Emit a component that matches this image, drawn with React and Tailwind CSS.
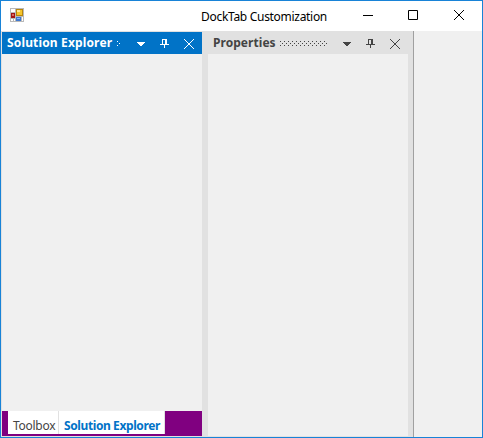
const FONT = 'font-["Noto_Sans","Open_Sans",sans-serif]';

function AppIcon() {
  return (
    <svg width="14" height="14" viewBox="0 0 14 14" shapeRendering="crispEdges">
      <rect width="14" height="14" fill="#b9b9b9" />
      <rect x="1" y="1" width="4" height="3" fill="#fff" />
      <rect x="1" y="5" width="4" height="5" fill="#a31515" />
      <rect x="2" y="6" width="2" height="2" fill="#d9675f" />
      <rect x="6" y="1" width="7" height="7" fill="#b8860b" />
      <rect x="7" y="2" width="5" height="5" fill="#f5c52c" />
      <rect x="7" y="2" width="3" height="2" fill="#fde694" />
      <rect x="6" y="9" width="5" height="4" fill="#3f78d0" />
      <rect x="7" y="10" width="3" height="1" fill="#8db8f5" />
      <rect x="12" y="9" width="1" height="4" fill="#fff" />
      <rect x="1" y="11" width="2" height="2" fill="#fff" />
      <rect x="4" y="11" width="1" height="2" fill="#fff" />
    </svg>
  );
}

function Grip({ width }) {
  const dots = [];
  for (let row = 0; row < 3; row++) {
    for (let x = row === 1 ? 2 : 0; x < width; x += 4) dots.push([x, row * 2]);
  }
  return (
    <svg className="mt-[9px]" width={width} height="5" fill="currentColor" shapeRendering="crispEdges">
      {dots.map(([x, y]) => <rect key={x + '-' + y} x={x} y={y} width="1" height="1" />)}
    </svg>
  );
}

function HeaderButtons() {
  return (
    <div className="ml-auto flex items-start pt-[7px] pr-[8px]">
      <svg className="mt-[3px] mr-[15px]" width="8" height="4" fill="currentColor" shapeRendering="crispEdges">
        <path d="M0 0h8v1H0zM1 1h6v1H1zM2 2h4v1H2zM3 3h2v1H3z" />
      </svg>
      <svg className="mr-[15px]" width="9" height="9" fill="currentColor" shapeRendering="crispEdges">
        <path d="M2 0h5v1H2zM2 1h1v4H2zM5 1h2v4H5zM0 5h9v1H0zM4 6h1v3H4z" />
      </svg>
      <svg width="10" height="10" stroke="currentColor" fill="none">
        <path d="M0 0l10 10M10 0L0 10" />
      </svg>
    </div>
  );
}

function Header({ title, active, grip }) {
  return (
    <div className={`flex h-[22px] items-start pl-[5px] ${active ? 'bg-[#0173c7] text-white' : 'bg-[#e1e1e1] text-[#444]'}`}>
      <span className={`whitespace-nowrap text-[12px] leading-[22px] font-bold ${active ? 'w-[110px] tracking-[0.15px]' : 'w-[67px] tracking-[0.05px]'}`}>{title}</span>
      <Grip width={grip} />
      <HeaderButtons />
    </div>
  );
}

export default function App() {
  return (
    <div className={`flex h-[438px] w-[483px] flex-col overflow-hidden border border-[#1883d7] bg-[#f0f0f0] ${FONT}`}>
      <div className="flex h-[30px] shrink-0 items-start bg-white pt-[7px] pl-[9px] text-black">
        <AppIcon />
        <span className="ml-[177px] whitespace-nowrap text-[12px] leading-4 tracking-[-0.3px] pt-px">DockTab Customization</span>
        <div className="ml-auto flex items-center pt-[2px] pr-[18px]">
          <svg width="10" height="10" fill="currentColor" shapeRendering="crispEdges"><path d="M0 5h10v1H0z" /></svg>
          <svg className="ml-[35px]" width="10" height="10" fill="none" stroke="currentColor"><path d="M.5.5h9v9h-9z" /></svg>
          <svg className="ml-[36px]" width="10" height="10" fill="none" stroke="currentColor"><path d="M0 0l10 10M10 0L0 10" /></svg>
        </div>
      </div>
      <div className="flex min-h-0 flex-1">
        <div className="flex w-[412px] border-t border-l border-[#e1e1e1]">
          <section className="flex w-[200px] flex-col">
            <Header title="Solution Explorer" active grip={4} />
            <div className="flex-1" />
            <div className="flex h-[26px] border-b border-[#e1e1e1] bg-[#800080] pl-[6px] text-[12px]">
              <div className="h-[23px] w-[51px] border-r border-[#e1e1e1] bg-white pl-[5px] leading-[30px] tracking-[-0.28px] whitespace-nowrap text-[#444]">Toolbox</div>
              <div className="h-[23px] w-[106px] border-r border-[#e1e1e1] bg-white pl-[5px] leading-[30px] font-bold tracking-[-0.4px] whitespace-nowrap text-[#0173c7]">Solution Explorer</div>
            </div>
          </section>
          <div className="w-[6px] bg-[#e1e1e1]" />
          <section className="flex w-[200px] flex-col border-b border-[#e1e1e1]">
            <Header title="Properties" grip={47} />
          </section>
          <div className="w-[5px] bg-[#e1e1e1]" />
        </div>
        <div className="w-px bg-[#a0a0a0]" />
        <div className="flex-1" />
      </div>
    </div>
  );
}
